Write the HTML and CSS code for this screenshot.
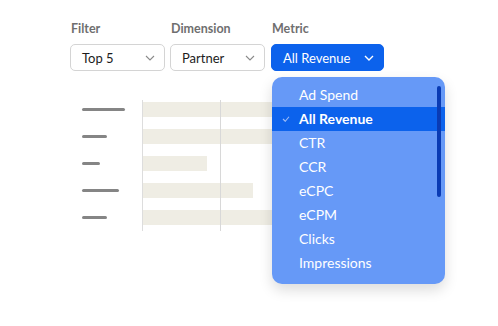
FILE: index.html
```html
<!DOCTYPE html>
<html lang="en">
<head>
    <meta charset="UTF-8">
    <meta name="viewport" content="width=device-width, initial-scale=1.0">
    <title>Report Filters</title>
    <link rel="stylesheet" href="styles.css">
</head>
<body>
    <div class="page">
        <div class="controls">
            <div class="field">
                <div class="field-label">Filter</div>
                <div class="select select-filter">
                    <span>Top 5</span>
                    <svg class="chevron" viewBox="0 0 10 6"><path d="M1 1l4 4 4-4"/></svg>
                </div>
            </div>
            <div class="field">
                <div class="field-label">Dimension</div>
                <div class="select select-dimension">
                    <span>Partner</span>
                    <svg class="chevron" viewBox="0 0 10 6"><path d="M1 1l4 4 4-4"/></svg>
                </div>
            </div>
            <div class="field field-metric">
                <div class="field-label">Metric</div>
                <div class="select select-metric">
                    <span>All Revenue</span>
                    <svg class="chevron" viewBox="0 0 10 6"><path d="M1 1l4 4 4-4"/></svg>
                </div>
                <div class="menu">
                    <div class="menu-item">Ad Spend</div>
                    <div class="menu-item selected">
                        <svg class="check" viewBox="0 0 10 8"><path d="M1 4l3 3 5-6"/></svg>
                        All Revenue
                    </div>
                    <div class="menu-item">CTR</div>
                    <div class="menu-item">CCR</div>
                    <div class="menu-item">eCPC</div>
                    <div class="menu-item">eCPM</div>
                    <div class="menu-item">Clicks</div>
                    <div class="menu-item">Impressions</div>
                    <div class="scrollbar"></div>
                </div>
            </div>
        </div>

        <div class="chart">
            <div class="gridline"></div>
            <div class="chart-row">
                <div class="row-label"><span style="width: 43px"></span></div>
                <div class="bar-track"><div class="bar" style="width: 170px"></div></div>
            </div>
            <div class="chart-row">
                <div class="row-label"><span style="width: 25px"></span></div>
                <div class="bar-track"><div class="bar" style="width: 170px"></div></div>
            </div>
            <div class="chart-row">
                <div class="row-label"><span style="width: 18px"></span></div>
                <div class="bar-track"><div class="bar" style="width: 64px"></div></div>
            </div>
            <div class="chart-row">
                <div class="row-label"><span style="width: 37px"></span></div>
                <div class="bar-track"><div class="bar" style="width: 110px"></div></div>
            </div>
            <div class="chart-row">
                <div class="row-label"><span style="width: 25px"></span></div>
                <div class="bar-track"><div class="bar" style="width: 170px"></div></div>
            </div>
        </div>
    </div>
</body>
</html>
```

FILE: styles.css
```css
html, body {
    height: 100%;
}
body {
    font-family: 'Lato', 'Liberation Sans', sans-serif;
    background-color: #fff;
    margin: 0;
    padding: 0;
    color: #1c1c1c;
    min-height: 326px;
}
.page {
    padding: 21px 0 0 70px;
}
.controls {
    display: flex;
    gap: 5px;
}
.field {
    display: flex;
    flex-direction: column;
    gap: 8px;
}
.field-metric {
    position: relative;
    z-index: 2;
    margin-left: 1px;
}
.field-label {
    font-size: 12.5px;
    font-weight: 700;
    color: #6f6f6f;
    line-height: 15px;
    padding-left: 1px;
}
.select {
    display: flex;
    justify-content: space-between;
    align-items: center;
    box-sizing: border-box;
    height: 27px;
    padding: 0 9px 0 11px;
    border: 1px solid #d4d4d4;
    border-radius: 5px;
    font-size: 13px;
    color: #1c1c1c;
    background-color: #fff;
}
.select-filter {
    width: 95px;
}
.select-dimension {
    width: 95px;
}
.select-metric {
    width: 113px;
    background-color: #0c62ec;
    border-color: #0c62ec;
    color: #fff;
}
.chevron {
    width: 10px;
    height: 6px;
    fill: none;
    stroke: #8a8a8a;
    stroke-width: 1.1;
}
.select-metric .chevron {
    stroke: #fff;
    stroke-width: 1.4;
}
.menu {
    position: absolute;
    top: 56px;
    left: 1px;
    width: 173px;
    box-sizing: border-box;
    padding: 6px 0 9px;
    background-color: #6699f7;
    border-radius: 10px;
    box-shadow: 0 6px 14px rgba(0, 0, 0, 0.14);
}
.menu-item {
    position: relative;
    height: 24px;
    line-height: 24px;
    padding-left: 27px;
    font-size: 14px;
    color: #fff;
}
.menu-item.selected {
    background-color: #0c62ec;
    font-weight: 700;
}
.check {
    position: absolute;
    left: 10px;
    top: 9px;
    width: 8px;
    height: 6px;
    fill: none;
    stroke: #9ebcf6;
    stroke-width: 1.5;
}
.scrollbar {
    position: absolute;
    top: 9px;
    right: 4px;
    width: 4px;
    height: 111px;
    border-radius: 2px;
    background-color: #0a3bb4;
}
.chart {
    position: relative;
    margin-top: 25px;
    width: 300px;
}
.chart::before {
    content: '';
    position: absolute;
    left: 72px;
    top: 4px;
    bottom: 0;
    width: 1px;
    background-color: #dddddd;
}
.gridline {
    position: absolute;
    left: 150px;
    top: 4px;
    bottom: 0;
    width: 1px;
    background-color: #d8d8d8;
    z-index: 1;
}
.chart-row {
    display: flex;
    align-items: center;
    height: 27px;
}
.row-label {
    width: 72px;
    padding-left: 12px;
    box-sizing: border-box;
}
.row-label span {
    display: block;
    height: 3px;
    border-radius: 2px;
    background-color: #858585;
}
.bar-track {
    flex: 1;
    padding-left: 1px;
}
.bar {
    height: 15px;
    background-color: #efede4;
}
```
